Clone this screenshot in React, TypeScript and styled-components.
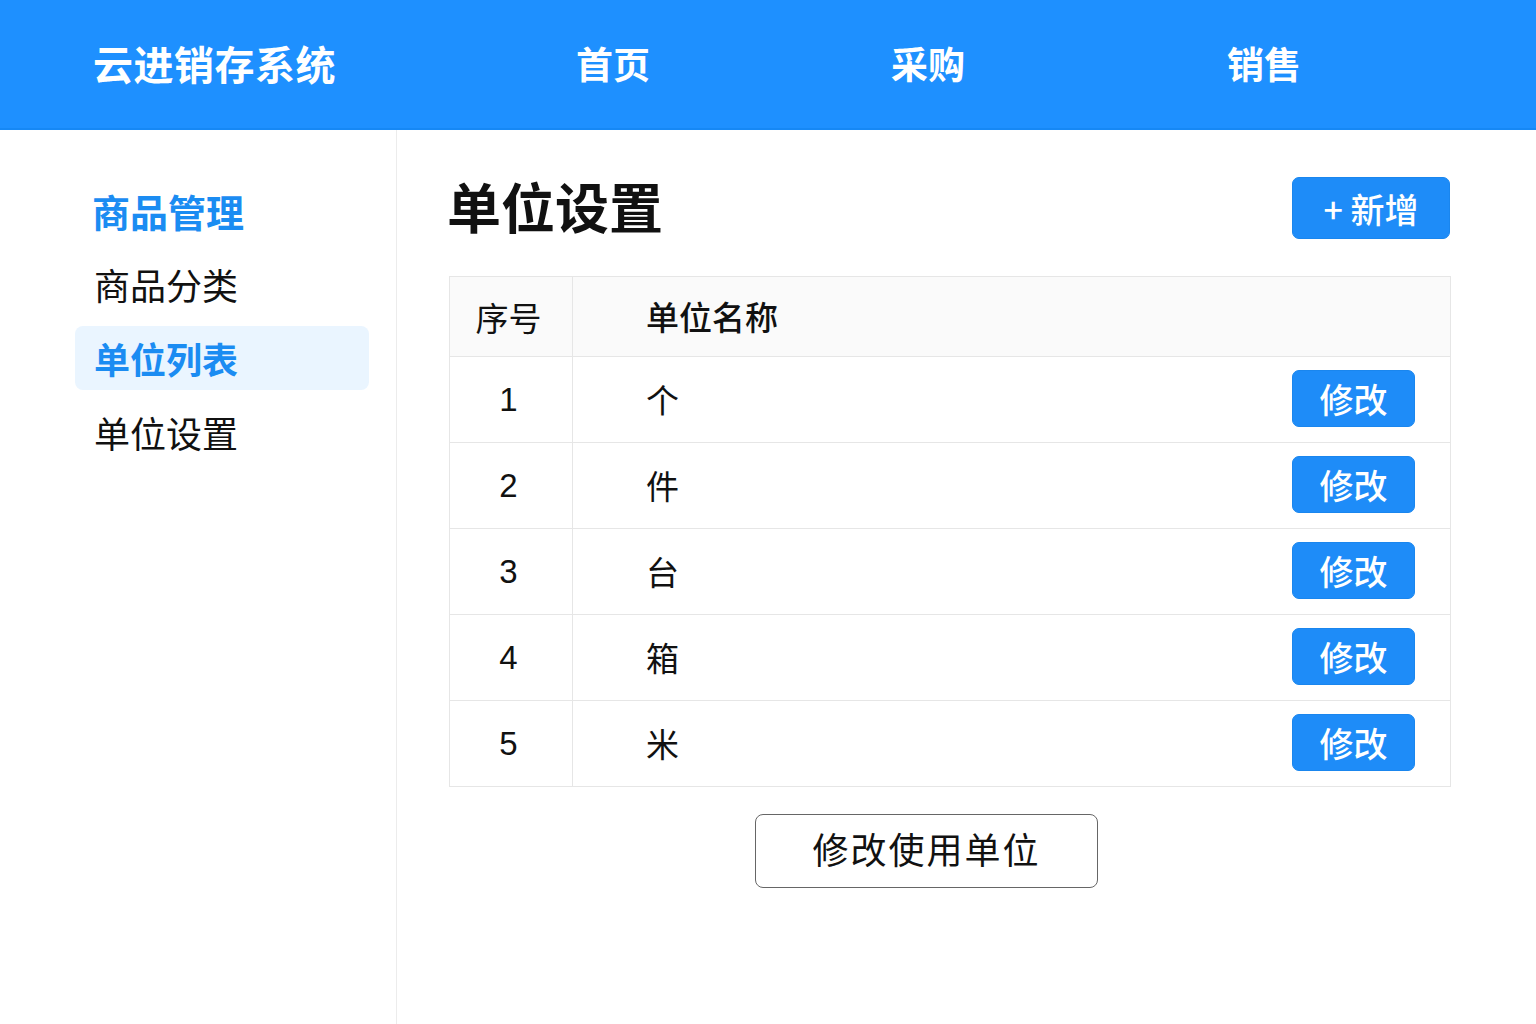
import styled, { createGlobalStyle } from 'styled-components';

const GlobalStyle = createGlobalStyle`
  html, body {
    margin: 0;
    padding: 0;
    background: #ffffff;
    font-family: "Liberation Sans", "Noto Sans CJK SC", sans-serif;
    color: #111111;
  }
  * {
    box-sizing: border-box;
  }
`;

const units = ['个', '件', '台', '箱', '米'];
const navItems = ['首页', '采购', '销售'];

function App() {
  return (
    <>
      <GlobalStyle />
      <Page>
        <Header>
          <Brand>云进销存系统</Brand>
          <Nav>
            {navItems.map((item) => (
              <NavItem key={item}>{item}</NavItem>
            ))}
          </Nav>
        </Header>
        <Body>
          <Sidebar>
            <SideTitle>商品管理</SideTitle>
            <SideItem>商品分类</SideItem>
            <SideItem $active>单位列表</SideItem>
            <SideItem>单位设置</SideItem>
          </Sidebar>
          <Main>
            <TitleRow>
              <PageTitle>单位设置</PageTitle>
              <PrimaryButton $wide>+ 新增</PrimaryButton>
            </TitleRow>
            <Table>
              <HeadRow>
                <IndexCell>序号</IndexCell>
                <NameCell $head>单位名称</NameCell>
              </HeadRow>
              {units.map((unit, index) => (
                <Row key={unit}>
                  <IndexCell>{index + 1}</IndexCell>
                  <NameCell>
                    <span>{unit}</span>
                    <PrimaryButton>修改</PrimaryButton>
                  </NameCell>
                </Row>
              ))}
            </Table>
            <Footer>
              <OutlineButton>修改使用单位</OutlineButton>
            </Footer>
          </Main>
        </Body>
      </Page>
    </>
  );
}

const Page = styled.div`
  min-height: 1024px;
  display: flex;
  flex-direction: column;
`;

const Header = styled.header`
  height: 130px;
  background: #1e90ff;
  border-bottom: 2px solid #1688f5;
  display: flex;
  align-items: center;
  padding: 0 0 2px 93px;
  color: #ffffff;
`;

const Brand = styled.div`
  flex-shrink: 0;
  font-size: 40px;
  font-weight: 700;
  letter-spacing: 0.5px;
  width: 483px;
`;

const Nav = styled.nav`
  display: flex;
  align-items: center;
  gap: 241px;
`;

const NavItem = styled.div`
  flex-shrink: 0;
  font-size: 37px;
  font-weight: 700;
  width: 74px;
  &:nth-child(3) {
    margin-left: 21px;
  }
`;

const Body = styled.div`
  flex: 1;
  display: flex;
`;

const Sidebar = styled.aside`
  width: 397px;
  border-right: 1px solid #ececec;
  padding: 48px 27px 0 75px;
  display: flex;
  flex-direction: column;
  gap: 10px;
`;

const SideTitle = styled.div`
  height: 64px;
  display: flex;
  align-items: center;
  padding-left: 17px;
  font-size: 38px;
  font-weight: 700;
  color: #1b8cf2;
`;

const SideItem = styled.div<{ $active?: boolean }>`
  height: 64px;
  display: flex;
  align-items: center;
  padding-left: 19px;
  border-radius: 8px;
  font-size: 36px;
  font-weight: ${(p) => (p.$active ? 700 : 400)};
  color: ${(p) => (p.$active ? '#1b8cf2' : '#111111')};
  background: ${(p) => (p.$active ? '#eaf5ff' : 'transparent')};
`;

const Main = styled.main`
  width: 1054px;
  padding: 47px 0 0 52px;
`;

const TitleRow = styled.div`
  height: 62px;
  display: flex;
  align-items: center;
  justify-content: space-between;
`;

const PageTitle = styled.h1`
  margin: 0 0 6px -2px;
  font-size: 54px;
  font-weight: 700;
  color: #111111;
`;

const PrimaryButton = styled.button<{ $wide?: boolean }>`
  width: ${(p) => (p.$wide ? '158px' : '123px')};
  height: ${(p) => (p.$wide ? '62px' : '57px')};
  border: 1px solid #1a86ee;
  border-radius: 7px;
  background: #1e8cf8;
  color: #ffffff;
  font-family: "Noto Sans CJK SC", sans-serif;
  font-size: 34px;
  font-weight: 500;
  display: flex;
  align-items: center;
  justify-content: center;
  padding: 0;
  white-space: pre;
  margin-right: 1px;
`;

const Table = styled.div`
  margin-top: 37px;
  width: 1002px;
  border: 1px solid #e6e6e6;
`;

const HeadRow = styled.div`
  height: 80px;
  display: flex;
  background: #fafafa;
  border-bottom: 1px solid #e6e6e6;
`;

const Row = styled.div`
  height: 86px;
  display: flex;
  border-bottom: 1px solid #e6e6e6;
  &:last-child {
    border-bottom: none;
    height: 85px;
  }
`;

const IndexCell = styled.div`
  width: 123px;
  border-right: 1px solid #e6e6e6;
  display: flex;
  align-items: center;
  justify-content: center;
  padding-right: 5px;
  font-size: 33px;
  color: #111111;
`;

const NameCell = styled.div<{ $head?: boolean }>`
  flex: 1;
  display: flex;
  align-items: center;
  justify-content: space-between;
  padding: 0 34px 2px 73px;
  font-size: 33px;
  font-weight: ${(p) => (p.$head ? 500 : 400)};
  color: #111111;
`;

const Footer = styled.div`
  margin-top: 27px;
  padding-left: 306px;
`;

const OutlineButton = styled.button`
  width: 343px;
  height: 74px;
  border: 1.5px solid #666666;
  border-radius: 8px;
  background: #ffffff;
  color: #111111;
  font-family: "Noto Sans CJK SC", sans-serif;
  font-size: 36px;
  letter-spacing: 2px;
  padding: 0 0 6px;
`;

export default App;
